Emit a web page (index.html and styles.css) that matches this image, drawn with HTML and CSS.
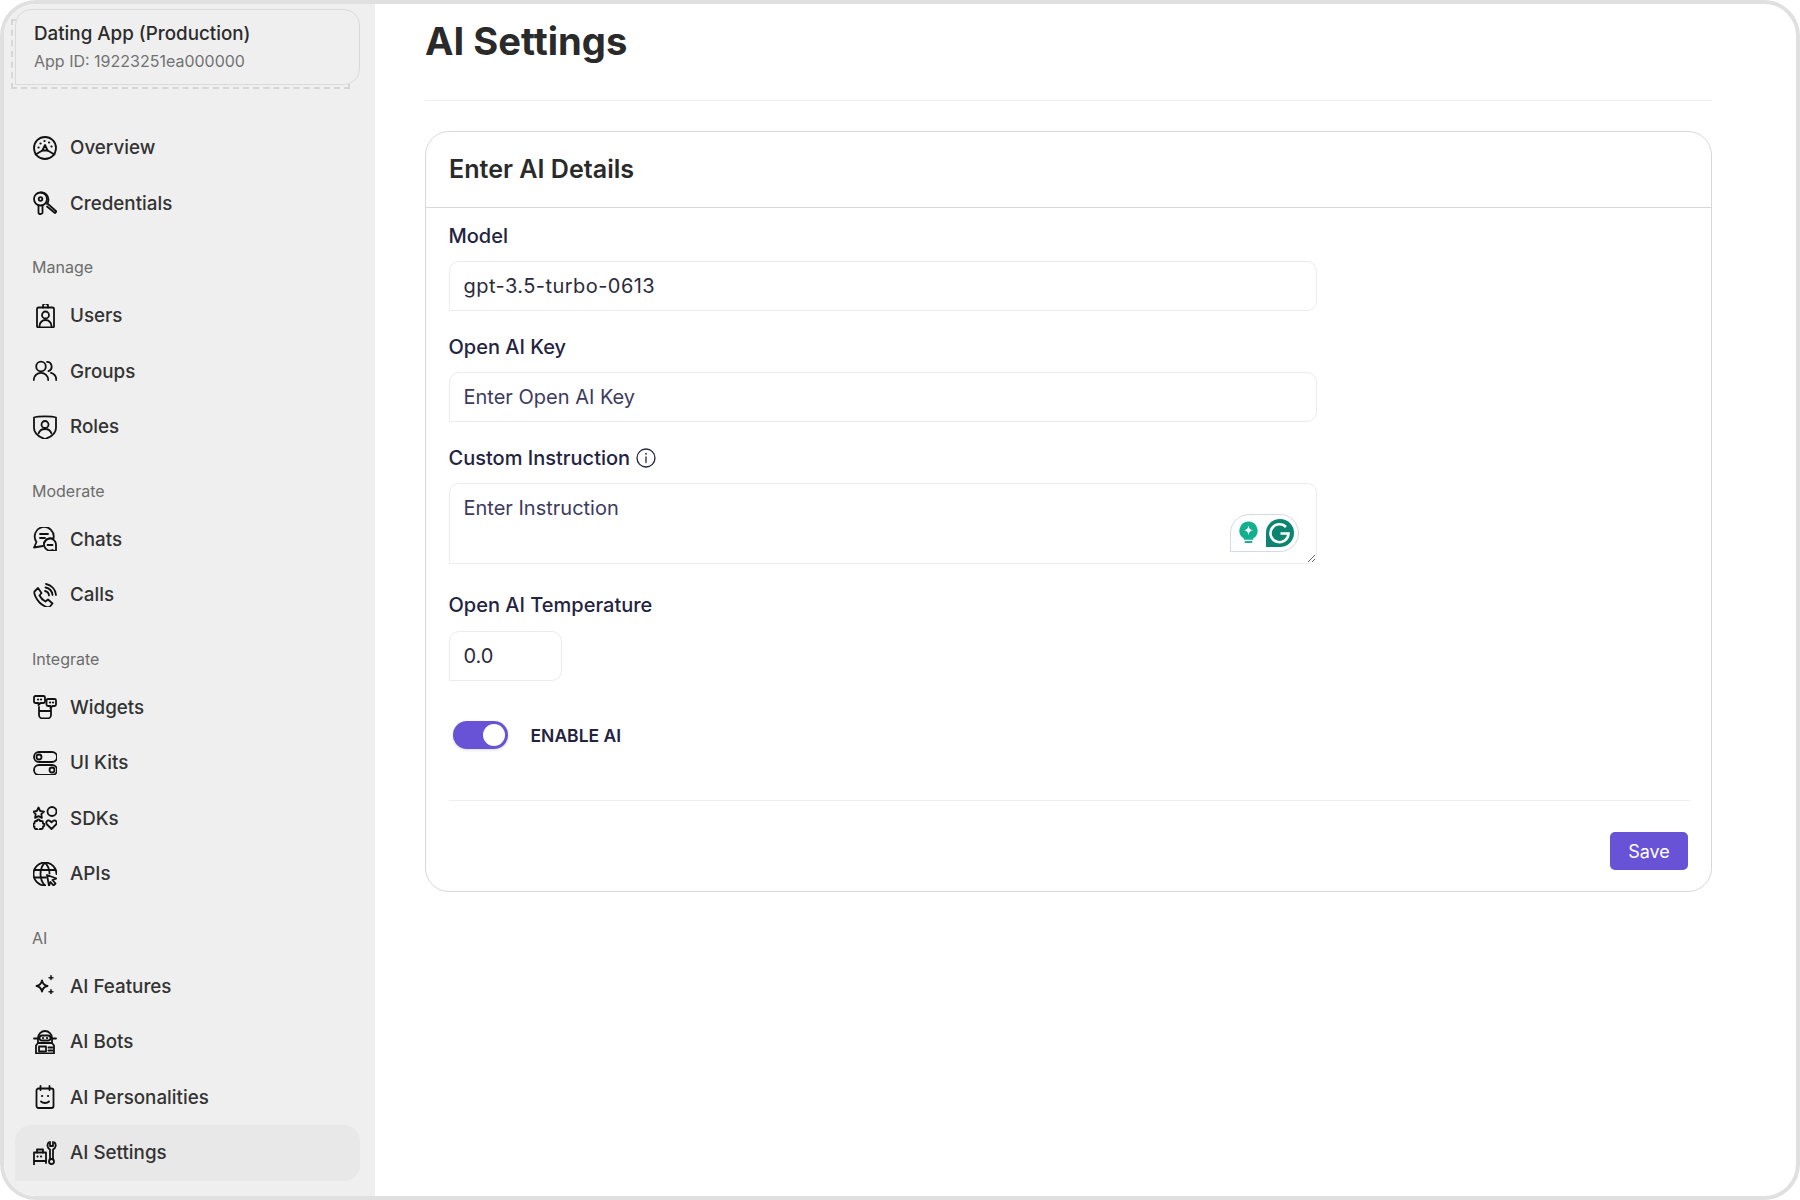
FILE: index.html
```html
<!DOCTYPE html>
<html lang="en">

<head>
    <meta charset="UTF-8">
    <meta name="viewport" content="width=device-width, initial-scale=1.0">
    <title>AI Settings</title>
    <link rel="stylesheet" href="styles.css">
</head>

<body>
    <div class="frame">
        <aside class="sidebar">
            <div class="app-switch">
                <div class="app-card">
                    <div class="app-name">Dating App (Production)</div>
                    <div class="app-id">App ID: 19223251ea000000</div>
                </div>
            </div>

            <nav class="nav">
                <a class="nav-item" href="#">
                    <svg class="nav-icon" viewBox="0 0 24 24"><circle cx="12" cy="12" r="11"/><path d="M12 9 9.400 14.500h5.200z"/><path d="M9.400 14.500 2.500 18.500M14.600 14.500l6.900 4"/><path class="dots" d="M5.500 11.500h.1M7.500 7.500h.1M11.500 5h.1M16 6.500h.1M18.500 10.500h.1"/></svg>
                    <span>Overview</span>
                </a>
                <a class="nav-item" href="#">
                    <svg class="nav-icon" viewBox="0 0 24 24"><circle cx="7.500" cy="8" r="6.500"/><circle cx="7.500" cy="8" r="1.800"/><path d="M5.500 14.200V22L7 23.500 9.500 22v-7.800"/><path d="M8 1.500a7 7 0 0 1 7.500 7 7 7 0 0 1-1.500 4.500"/><path d="M15 13l8.500 7.500-1.500 1.500-8-6.500"/></svg>
                    <span>Credentials</span>
                </a>

                <div class="nav-label">Manage</div>
                <a class="nav-item" href="#">
                    <svg class="nav-icon" viewBox="0 0 24 24"><rect x="4" y="3.500" width="17" height="20" rx="1.500"/><path d="M10 3.500V2a2.500 2.500 0 0 1 5 0v1.500"/><circle cx="12.500" cy="11" r="3.500"/><path d="M6.500 23.500v-1.500a6 6 0 0 1 12 0v1.500"/></svg>
                    <span>Users</span>
                </a>
                <a class="nav-item" href="#">
                    <svg class="nav-icon" viewBox="0 0 24 24"><circle cx="8" cy="7.500" r="4.800"/><path d="M.8 21a7.200 7.200 0 0 1 14.400 0"/><path d="M14 2.800a4.800 4.800 0 0 1 1.500 9.300M18 13.800A7.200 7.200 0 0 1 23.200 21"/></svg>
                    <span>Groups</span>
                </a>
                <a class="nav-item" href="#">
                    <svg class="nav-icon" viewBox="0 0 24 24"><path d="M1 2.500C5 1 19 1 23 2.500v10.500c0 5-5 9-11 11C6 22 1 18 1 13z"/><circle cx="12" cy="9.500" r="3.500"/><path d="M5.500 18.500c1-3 3.500-4.500 6.500-4.500s5.500 1.500 6.500 4.500"/></svg>
                    <span>Roles</span>
                </a>

                <div class="nav-label">Moderate</div>
                <a class="nav-item" href="#">
                    <svg class="nav-icon" viewBox="0 0 24 24"><path d="M11 16.500a7 7 0 0 1 .5-1.500 8 8 0 0 1 9-3.500A9.500 9.500 0 1 0 3.500 15l-2.500 5.500 9-1.500"/><path d="M7 7h8M7 11h5"/><path d="M23 18a6 6 0 1 0-3.500 5l3.500 1.500z"/><path d="M14.500 18h5"/></svg>
                    <span>Chats</span>
                </a>
                <a class="nav-item" href="#">
                    <svg class="nav-icon" viewBox="0 0 24 24"><path d="M5 5 1.500 8.500c-1 2 2 8 5 11s8 5.500 10 4.500l3-3.500-4.500-4-2.500 2c-2-1-5-4-6-6l2-2.500z"/><path d="M12 8a5 5 0 0 1 4 4.500M12.500 4.500a8.500 8.500 0 0 1 7 7.500M13 1a12 12 0 0 1 10 11"/></svg>
                    <span>Calls</span>
                </a>

                <div class="nav-label">Integrate</div>
                <a class="nav-item" href="#">
                    <svg class="nav-icon" viewBox="0 0 24 24"><path d="M2.500 1h8a1.500 1.500 0 0 1 1.500 1.500v4A1.500 1.500 0 0 1 10.500 8H7.500l-2 2V8H2.500A1.500 1.500 0 0 1 1 6.500v-4A1.500 1.500 0 0 1 2.500 1z"/><path d="M15 4h6.500A1.500 1.500 0 0 1 23 5.500v4a1.500 1.500 0 0 1-1.500 1.500h-2l-2 2.500V11H15a1.500 1.500 0 0 1-1.500-1.500v-4A1.500 1.500 0 0 1 15 4z"/><path d="M6 12v8c0 2 2 3.500 4 3.500h4c2 0 4-1.500 4-3.500v-6M6 16h12"/><path class="dots" d="M5 4.500h.1M8 4.500h.1M17 7.500h.1M20 7.500h.1"/></svg>
                    <span>Widgets</span>
                </a>
                <a class="nav-item" href="#">
                    <svg class="nav-icon" viewBox="0 0 24 24"><rect x="1" y="1" width="23" height="10" rx="5"/><circle cx="6" cy="6" r="2.500"/><rect x="1" y="14" width="23" height="10" rx="5"/><circle cx="19" cy="19" r="2.500"/></svg>
                    <span>UI Kits</span>
                </a>
                <a class="nav-item" href="#">
                    <svg class="nav-icon" viewBox="0 0 24 24"><path d="M5.500 1.500 7.200 5l3.800.6-2.700 2.600.6 3.700-3.400-1.800-3.400 1.800.6-3.700L0 5.600 3.800 5z"/><circle cx="19" cy="5.500" r="4.500"/><path d="M3 15h1a1.500 1.500 0 0 1 3 0h1.500A1.500 1.500 0 0 1 10 16.500v1a1.500 1.500 0 0 1 0 3v1A1.500 1.500 0 0 1 8.500 23H7a1.500 1.500 0 0 1-3 0H3A1.500 1.500 0 0 1 1.500 21.500v-1a1.500 1.500 0 0 1 0-3v-1A1.500 1.500 0 0 1 3 15z"/><path d="M18.500 23 14 18.500c-2-2.500 1-5.500 3-3.500l1.500 1.300L20 15c2-2 5 1 3 3.500z"/></svg>
                    <span>SDKs</span>
                </a>
                <a class="nav-item" href="#">
                    <svg class="nav-icon" viewBox="0 0 24 24"><path d="M23.500 12A11.500 11.500 0 1 0 12 23.500"/><path d="M12 .5c-3 3-4.500 7-4.500 11.500S9 20.500 12 23.500M12 .5c3 3 4.500 7 4.500 11"/><path d="M1.500 8h21M1.500 15.500h11.500"/><path d="M14 13l9.500 3.500-4 1.500 3 3.500-2 2-3-3.500-1.500 4z"/></svg>
                    <span>APIs</span>
                </a>

                <div class="nav-label">AI</div>
                <a class="nav-item" href="#">
                    <svg class="nav-icon" viewBox="0 0 24 24"><path d="M9 6.500c.8 3.500 2 5 5.500 5.500-3.500.5-4.700 2-5.500 5.500C8.200 14 7 12.500 3.500 12 7 11.500 8.200 10 9 6.500z"/><path class="solid" d="M18 1.500c.3 1.400.8 2 2.500 2.300-1.700.3-2.200.9-2.500 2.300-.3-1.400-.8-2-2.500-2.300 1.700-.3 2.200-.9 2.500-2.300zM18 15.500c.3 1.400.8 2 2.500 2.300-1.700.3-2.200.9-2.500 2.300-.3-1.400-.8-2-2.500-2.300 1.700-.3 2.200-.9 2.500-2.300z"/></svg>
                    <span>AI Features</span>
                </a>
                <a class="nav-item" href="#">
                    <svg class="nav-icon" viewBox="0 0 24 24"><path d="M5 13V8a7 7 0 0 1 14 0v5"/><path d="M1 8.500h4M19 8.500h4"/><rect x="6.500" y="5.500" width="11" height="5" rx="2.500"/><path d="M5 13h14l2 2.500v8H3v-8z"/><rect x="6" y="16.500" width="7" height="5"/><path d="M15.500 17.500h4M15.500 20.500h4"/><path class="dots" d="M10 8h.1M14 8h.1"/></svg>
                    <span>AI Bots</span>
                </a>
                <a class="nav-item" href="#">
                    <svg class="nav-icon" viewBox="0 0 24 24"><rect x="3.500" y="3.500" width="17" height="19.500" rx="2"/><path d="M7.500 1v4M16.500 1v4"/><path class="dots" d="M9 11h.1M15 11h.1"/><path d="M8 16.500c2 2 6 2 8 0"/></svg>
                    <span>AI Personalities</span>
                </a>
                <a class="nav-item nav-item-active" href="#">
                    <svg class="nav-icon" viewBox="0 0 24 24"><path d="M1 24V11.500h12V22"/><path d="M4 11.500V8.500h6v3"/><path class="dots" d="M4.500 15.500h.1M8 15.500h.1"/><path d="M1 20h12"/><path d="M15.500 1.500C14 3.500 14 7 17 8.500v9.500M21.500 1.500C23.500 3.500 23 7 20 8.500v9.500"/><path d="M17 1v4h3V1"/><circle cx="18.500" cy="20.500" r="2.500"/></svg>
                    <span>AI Settings</span>
                </a>
            </nav>
        </aside>

        <main class="main">
            <header class="page-head">
                <h1>AI Settings</h1>
            </header>

            <section class="card">
                <div class="card-head">
                    <h2>Enter AI Details</h2>
                </div>
                <form class="card-body">
                    <label class="field-label" for="model">Model</label>
                    <input class="text-input model-input" id="model" type="text" value="gpt-3.5-turbo-0613">

                    <label class="field-label" for="key">Open AI Key</label>
                    <input class="text-input" id="key" type="text" placeholder="Enter Open AI Key">

                    <label class="field-label" for="instruction">Custom Instruction
                        <svg class="info-icon" viewBox="0 0 20 20"><circle cx="10" cy="10" r="9"/><path d="M10 9v5.500"/><path class="dot" d="M10 5.800h.1"/></svg>
                    </label>
                    <div class="textarea-wrap">
                        <textarea class="text-input text-area" id="instruction" placeholder="Enter Instruction"></textarea>
                        <div class="grammarly">
                            <svg class="g-bulb" viewBox="0 0 20 24"><path fill="#12b08f" d="M10 0a9.500 9.500 0 0 1 5 17.600V19H5v-1.400A9.500 9.500 0 0 1 10 0z"/><path fill="#12b08f" d="M6 20.500h8V22.500H6z"/><path fill="#fff" d="M10 4c.6 3.200 1.600 4.400 5 5.200-3.400.7-4.400 1.800-5 5.100-.6-3.300-1.600-4.400-5-5.100 3.400-.8 4.400-2 5-5.200z"/></svg>
                            <svg class="g-logo" viewBox="0 0 28 28"><path fill="#0b8571" d="M14 0a14 14 0 0 1 0 28H0V14A14 14 0 0 1 14 0z"/><path fill="none" stroke="#fff" stroke-width="2.600" d="M20 8a9 9 0 1 0 2.500 6.500H14.500"/></svg>
                        </div>
                    </div>

                    <label class="field-label" for="temp">Open AI Temperature</label>
                    <input class="text-input temp-input" id="temp" type="text" value="0.0">

                    <div class="toggle-row">
                        <span class="toggle"><span class="toggle-knob"></span></span>
                        <span class="toggle-text">ENABLE AI</span>
                    </div>

                    <div class="card-foot">
                        <button class="save-btn" type="button">Save</button>
                    </div>
                </form>
            </section>
        </main>
    </div>
</body>

</html>
```

FILE: styles.css
```css
* {
    box-sizing: border-box;
}

body {
    margin: 0;
    background-color: #fff;
    font-family: Inter, "Noto Sans", sans-serif;
}

.frame {
    display: flex;
    width: 1800px;
    height: 1200px;
    border: 4px solid #e0e0e0;
    border-radius: 36px;
    overflow: hidden;
    background-color: #fff;
}

/* Sidebar */
.sidebar {
    width: 371px;
    flex-shrink: 0;
    padding: 5px 15px 0 11px;
    background-color: #efefef;
}

.app-switch {
    position: relative;
}

.app-switch::before {
    content: "";
    position: absolute;
    top: 10px;
    left: -4px;
    right: 10px;
    bottom: -4px;
    border: 2px dashed #d6d6d6;
}

.app-card {
    position: relative;
    height: 76px;
    padding: 12px 18px 0;
    border: 1px solid #dadada;
    border-radius: 16px 16px 16px 0;
    background-color: #efefef;
}

.app-name {
    font-size: 18.800px;
    font-weight: 500;
    line-height: 24px;
    color: #2b2b2b;
}

.app-id {
    margin-top: 5px;
    font-size: 16px;
    line-height: 20px;
    color: #727272;
}

.nav {
    margin-top: 35px;
}

.nav-item {
    display: flex;
    align-items: center;
    gap: 13px;
    height: 55.500px;
    padding-left: 18px;
    border-radius: 16px 16px 16px 0;
    font-size: 18.800px;
    font-weight: 500;
    color: #333;
    text-decoration: none;
}

.nav-item-active {
    background-color: #e8e8e8;
}

.nav-icon {
    width: 24px;
    height: 24px;
    flex-shrink: 0;
    fill: none;
    stroke: #111;
    stroke-width: 1.800;
    stroke-linecap: round;
    stroke-linejoin: round;
}

.nav-icon .dots {
    stroke-width: 2.200;
}

.nav-icon .solid {
    fill: #111;
    stroke-width: 0.800;
}

.nav-label {
    height: 20px;
    margin: 26px 0 11px 17px;
    font-size: 16px;
    line-height: 20px;
    color: #6c6c6c;
}

/* Main content */
.main {
    flex: 1;
    min-width: 0;
    padding: 0 84px 0 50px;
}

.page-head {
    height: 97px;
    border-bottom: 1px solid #eeeeee;
}

.page-head h1 {
    margin: 0;
    padding-top: 13px;
    font-size: 38.200px;
    font-weight: 700;
    line-height: 48px;
    color: #2a2a2a;
}

.card {
    height: 761px;
    margin-top: 30px;
    border: 1px solid #d8d8d8;
    border-radius: 24px;
}

.card-head {
    height: 76px;
    padding: 0 23px;
    border-bottom: 1px solid #d8d8d8;
}

.card-head h2 {
    margin: 0;
    font-size: 25.100px;
    font-weight: 600;
    line-height: 75px;
    color: #2a2a2a;
}

.card-body {
    padding: 16px 21px 0 22.500px;
}

.field-label {
    display: flex;
    align-items: center;
    gap: 6px;
    height: 24px;
    margin-bottom: 13px;
    font-size: 20px;
    font-weight: 500;
    color: #23233f;
}

.text-input {
    display: block;
    width: 868px;
    height: 50px;
    margin-bottom: 24px;
    padding: 0 14px;
    border: 1px solid #ececec;
    border-radius: 10px 10px 10px 0;
    outline: none;
    background-color: #fff;
    font-family: inherit;
    font-size: 20px;
    color: #2b2b3b;
}

.text-input::placeholder {
    color: #3b3b5e;
    opacity: 1;
}

.model-input {
    letter-spacing: 0.450px;
}

.info-icon {
    width: 20px;
    height: 20px;
    fill: none;
    stroke: #23233f;
    stroke-width: 1.300;
    stroke-linecap: round;
}

.info-icon .dot {
    stroke-width: 1.800;
}

.textarea-wrap {
    position: relative;
    width: 868px;
    margin-bottom: 29px;
}

.text-area {
    height: 81px;
    margin-bottom: 0;
    padding-top: 12px;
    line-height: 24px;
}

.grammarly {
    position: absolute;
    right: 18px;
    bottom: 12px;
    display: flex;
    align-items: center;
    justify-content: space-between;
    width: 69px;
    height: 38px;
    padding: 0 4px 0 8px;
    border: 1px solid #d5d8e6;
    border-radius: 19px 19px 19px 0;
    background-color: #fff;
}

.g-bulb {
    width: 19px;
    height: 24px;
}

.g-logo {
    width: 28px;
    height: 28px;
}

.temp-input {
    width: 113px;
    margin-top: 14px;
    margin-bottom: 40px;
}

.toggle-row {
    display: flex;
    align-items: center;
    gap: 23px;
    height: 28px;
    padding-left: 4px;
}

.toggle {
    display: flex;
    align-items: center;
    justify-content: flex-end;
    width: 55px;
    height: 28px;
    padding-right: 3px;
    border-radius: 14px;
    background-color: #6852d6;
    box-shadow: 0 1px 3px rgba(0, 0, 0, 0.150);
}

.toggle-knob {
    width: 22px;
    height: 22px;
    border-radius: 50%;
    background-color: #fff;
}

.toggle-text {
    font-size: 17.500px;
    font-weight: 600;
    color: #23233f;
}

.card-foot {
    display: flex;
    justify-content: flex-end;
    height: 92px;
    margin-top: 51px;
    padding: 31px 0 0;
    border-top: 1px solid #eeeeee;
}

.save-btn {
    width: 78px;
    height: 38px;
    margin-right: 2px;
    border: none;
    border-radius: 5px;
    background-color: #6852d6;
    font-family: inherit;
    font-size: 18px;
    color: #fff;
}
```
